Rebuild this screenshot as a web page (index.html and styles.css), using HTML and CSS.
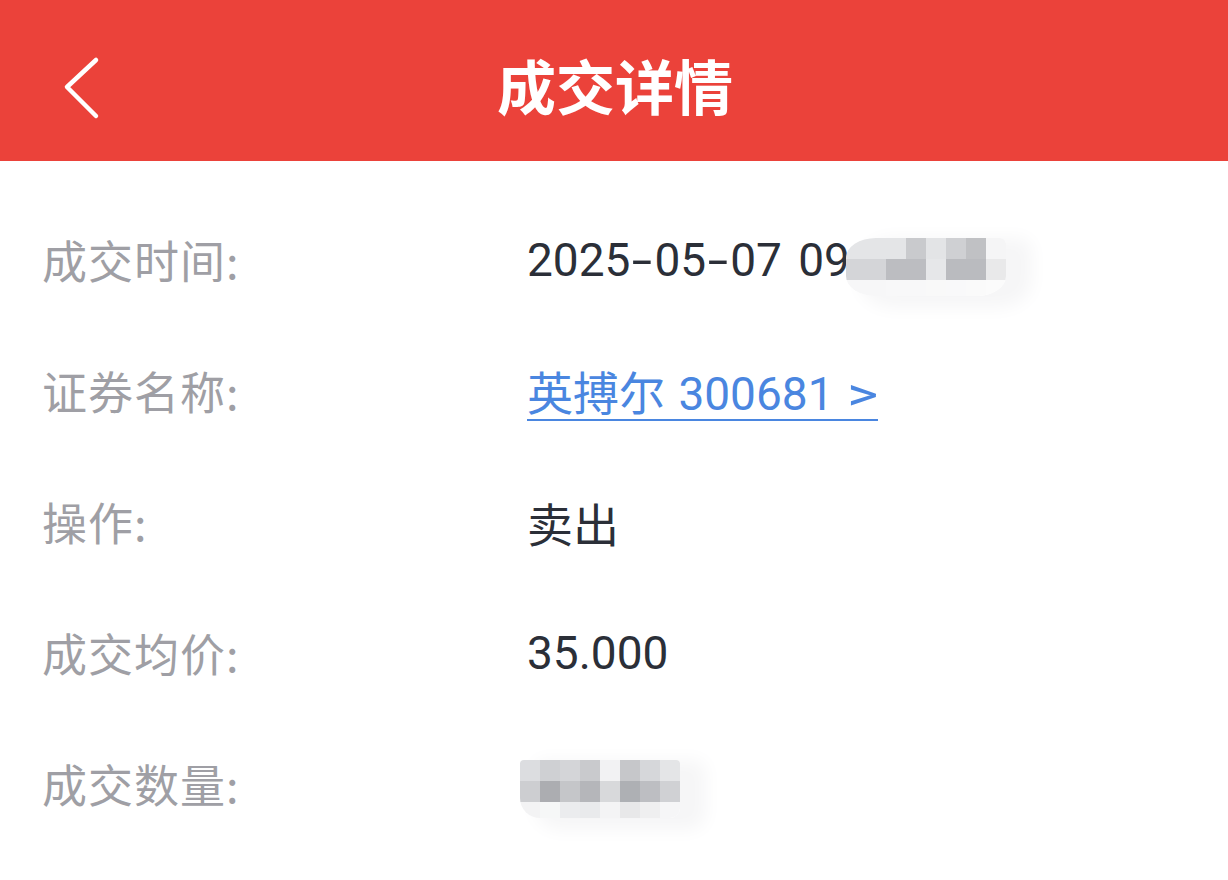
FILE: index.html
```html
<!DOCTYPE html>
<html lang="zh-CN">
<head>
<meta charset="utf-8">
<title>成交详情</title>
<link rel="stylesheet" href="styles.css">
</head>
<body>
<header class="topbar">
  <svg class="back" width="40" height="70" viewBox="0 0 40 70"><polyline points="34,4 5,31 34,60" fill="none" stroke="#fff" stroke-width="4.5" stroke-linecap="round" stroke-linejoin="round"/></svg>
  <h1 class="title">成交详情</h1>
</header>
<main class="list">
  <div class="row">
    <div class="label">成交时间:</div>
    <div class="value">2025<span class="dash">-</span>05<span class="dash">-</span>07 09<span class="mosaic m1">
      <i style="background:#e4e5e7"></i><i style="background:#e4e5e7"></i><i style="background:#e4e5e7"></i><i style="background:#c9cacd"></i><i style="background:#e3e4e6"></i><i style="background:#cfd0d3"></i><i style="background:#c0c1c4"></i><i style="background:#f5f5f6"></i>
      <i style="background:#d4d5d8"></i><i style="background:#d4d5d8"></i><i style="background:#bcbdc1"></i><i style="background:#bcbdc1"></i><i style="background:#e6e7e9"></i><i style="background:#babbbf"></i><i style="background:#babbbf"></i><i style="background:#e9e9ea"></i>
      <i style="background:#f7f7f8"></i><i style="background:#f7f7f8"></i><i style="background:#f8f8f9"></i><i style="background:#f8f8f9"></i><i style="background:#f9f9f9"></i><i style="background:#f9f9fa"></i><i style="background:#fafafa"></i><i style="background:#fbfbfb"></i>
    </span></div>
  </div>
  <div class="row">
    <div class="label">证券名称:</div>
    <div class="value"><a class="link" href="#">英搏尔 300681 <span class="gt">&gt;</span></a></div>
  </div>
  <div class="row">
    <div class="label">操作:</div>
    <div class="value">卖出</div>
  </div>
  <div class="row">
    <div class="label">成交均价:</div>
    <div class="value">35.000</div>
  </div>
  <div class="row">
    <div class="label">成交数量:</div>
    <div class="value"><span class="mosaic m2">
      <i style="background:#dcdde0"></i><i style="background:#cfd0d3"></i><i style="background:#d4d5d8"></i><i style="background:#c9cacd"></i><i style="background:#f2f2f3"></i><i style="background:#c6c7ca"></i><i style="background:#d6d7da"></i><i style="background:#e4e5e7"></i>
      <i style="background:#cdced1"></i><i style="background:#acadb1"></i><i style="background:#c5c6c9"></i><i style="background:#b5b6ba"></i><i style="background:#d8d9db"></i><i style="background:#aeb0b4"></i><i style="background:#bdbec2"></i><i style="background:#d0d1d4"></i>
      <i style="background:#f3f3f4"></i><i style="background:#f6f7f7"></i><i style="background:#ebecee"></i><i style="background:#e9eaec"></i><i style="background:#f4f4f5"></i><i style="background:#e8e8e9"></i><i style="background:#efeff0"></i><i style="background:#f6f6f7"></i>
    </span></div>
  </div>
</main>
</body>
</html>
```
FILE: styles.css
```css
* { box-sizing: border-box; }
html, body { margin: 0; padding: 0; background: #fff; }
body {
  width: 1228px;
  height: 880px;
  overflow: hidden;
  font-family: Roboto, "Noto Sans CJK SC", sans-serif;
}
.topbar {
  position: relative;
  height: 161px;
  background: #eb423a;
  display: flex;
  align-items: center;
  justify-content: center;
}
.back {
  position: absolute;
  left: 62px;
  top: 56px;
}
.title {
  margin: 0;
  padding-top: 8px;
  padding-left: 2px;
  color: #fff;
  font-family: "Noto Sans CJK SC", sans-serif;
  font-weight: 700;
  font-size: 59px;
  line-height: 1;
}
.list {
  padding-top: 33px;
}
.row {
  height: 131px;
  display: flex;
  align-items: center;
  padding-left: 42px;
}
.label {
  width: 485px;
  color: #9f9fa5;
  font-size: 45px;
  font-family: "Noto Sans CJK SC", sans-serif;
  font-weight: 400;
  letter-spacing: 1px;
}
.value {
  display: flex;
  align-items: center;
  color: #2b2f38;
  font-size: 46px;
  font-family: Roboto, "Noto Sans CJK SC", sans-serif;
  word-spacing: 5px;
  white-space: pre;
}
.dash {
  display: inline-block;
  width: 24px;
  text-align: center;
  transform: scaleX(1.6);
}
.link {
  display: inline-block;
  color: #4a86e0;
  text-decoration: none;
  line-height: 50px;
  margin-top: 9px;
  border-bottom: 2px solid #4a86e0;
  word-spacing: 2px;
}
.gt {
  display: inline-block;
  transform: scaleX(1.3);
  transform-origin: left center;
  padding-right: 7px;
}
.mosaic {
  display: grid;
  grid-template-columns: repeat(8, 20px);
  grid-template-rows: 21px 21px 16px;
  border-radius: 30px 6px 30px 30px / 20px 6px 20px 20px;
  overflow: hidden;
  box-shadow: 20px 6px 18px 6px #f6f6f7;
}
.mosaic i { display: block; }
.m1 { margin-left: -4px; margin-top: 14px; }
.m2 { margin-left: -7px; margin-top: 10px; border-radius: 4px 4px 10px 20px; }
```
